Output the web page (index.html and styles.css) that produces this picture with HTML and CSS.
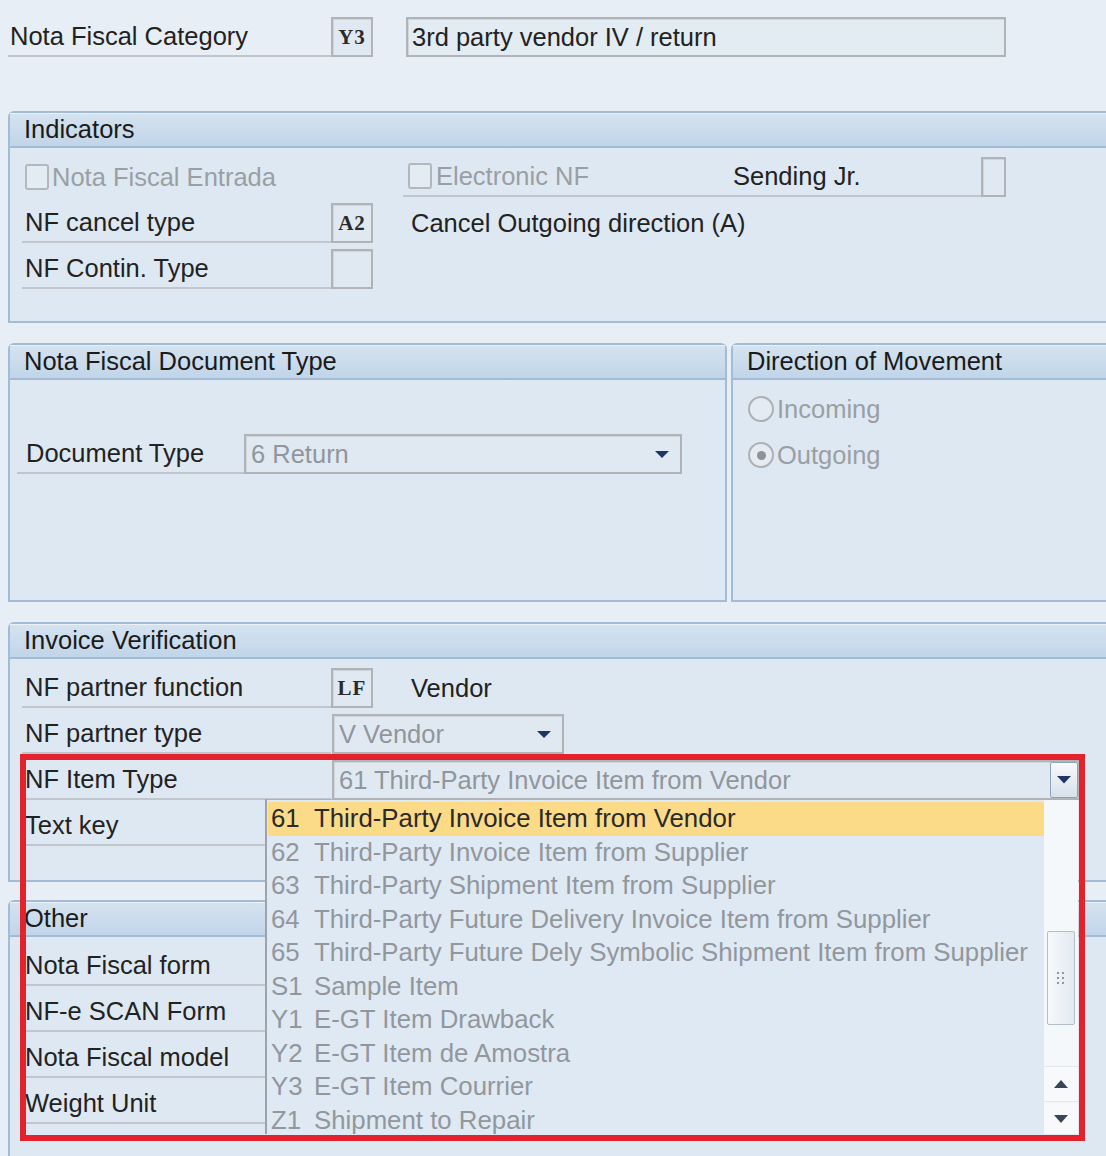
FILE: index.html
```html
<!DOCTYPE html>
<html>
<head>
<meta charset="utf-8">
<title>Nota Fiscal Category</title>
<link rel="stylesheet" href="styles.css">
</head>
<body>
<div class="page">
  <div class="toprow">
    <div class="lbl lbl-top">Nota Fiscal Category</div>
    <div class="box code">Y3</div>
    <div class="box desc">3rd party vendor IV / return</div>
  </div>

  <section class="panel ind">
    <div class="phead">Indicators</div>
    <div class="pbody ind-body">
      <div class="row">
        <div class="chk-cell"><span class="cb"></span><span class="dis">Nota Fiscal Entrada</span></div>
        <div class="chk-line">
          <div class="chk-left"><span class="cb"></span><span class="dis">Electronic NF</span></div>
          <span class="send">Sending Jr.</span>
        </div>
        <div class="box tiny"></div>
      </div>
      <div class="row">
        <div class="lbl">NF cancel type</div>
        <div class="box code">A2</div>
        <span class="after">Cancel Outgoing direction (A)</span>
      </div>
      <div class="row">
        <div class="lbl">NF Contin. Type</div>
        <div class="box code"></div>
      </div>
    </div>
  </section>

  <div class="split">
    <section class="panel doc">
      <div class="phead">Nota Fiscal Document Type</div>
      <div class="pbody doc-body">
        <div class="row">
          <div class="lbl lbl-doc">Document Type</div>
          <div class="box dd dd-doc"><span class="ddtext">6 Return</span><svg class="tri" width="16" height="9" viewBox="0 0 16 9"><path d="M1 1h14L8 8z" fill="#1f3566"/></svg></div>
        </div>
      </div>
    </section>
    <section class="panel dir">
      <div class="phead">Direction of Movement</div>
      <div class="pbody dir-body">
        <div class="radio-row"><span class="rb"></span><span class="dis">Incoming</span></div>
        <div class="radio-row"><span class="rb on"></span><span class="dis">Outgoing</span></div>
      </div>
    </section>
  </div>

  <section class="panel inv">
    <div class="phead">Invoice Verification</div>
    <div class="pbody inv-body">
      <div class="row">
        <div class="lbl">NF partner function</div>
        <div class="box code">LF</div>
        <span class="after">Vendor</span>
      </div>
      <div class="row">
        <div class="lbl">NF partner type</div>
        <div class="box dd dd-vendor"><span class="ddtext">V Vendor</span><svg class="tri" width="16" height="9" viewBox="0 0 16 9"><path d="M1 1h14L8 8z" fill="#1f3566"/></svg></div>
      </div>
      <div class="row">
        <div class="lbl">NF Item Type</div>
        <div class="box dd dd-item"><span class="ddtext">61 Third-Party Invoice Item from Vendor</span><span class="ddbtn"><svg width="14" height="8" viewBox="0 0 14 8"><path d="M0 0h14L7 7.5z" fill="#1f3566"/></svg></span></div>
      </div>
      <div class="row">
        <div class="lbl">Text key</div>
      </div>
    </div>
  </section>

  <section class="panel oth">
    <div class="phead">Other</div>
    <div class="pbody oth-body">
      <div class="row"><div class="lbl lbl-wide">Nota Fiscal form</div></div>
      <div class="row"><div class="lbl lbl-wide">NF-e SCAN Form</div></div>
      <div class="row"><div class="lbl lbl-wide">Nota Fiscal model</div></div>
      <div class="row"><div class="lbl lbl-wide">Weight Unit</div></div>
    </div>
  </section>
</div>

<div class="popup">
  <ul class="list">
    <li class="sel"><span class="c">61</span>Third-Party Invoice Item from Vendor</li>
    <li><span class="c">62</span>Third-Party Invoice Item from Supplier</li>
    <li><span class="c">63</span>Third-Party Shipment Item from Supplier</li>
    <li><span class="c">64</span>Third-Party Future Delivery Invoice Item from Supplier</li>
    <li><span class="c">65</span>Third-Party Future Dely Symbolic Shipment Item from Supplier</li>
    <li><span class="c">S1</span>Sample Item</li>
    <li><span class="c">Y1</span>E-GT Item Drawback</li>
    <li><span class="c">Y2</span>E-GT Item de Amostra</li>
    <li><span class="c">Y3</span>E-GT Item Courrier</li>
    <li><span class="c">Z1</span>Shipment to Repair</li>
  </ul>
  <div class="sbar">
    <div class="thumb"><svg width="10" height="14" viewBox="0 0 10 14"><g fill="#8f979f"><rect x="1" y="1" width="2" height="2"/><rect x="6" y="1" width="2" height="2"/><rect x="1" y="6" width="2" height="2"/><rect x="6" y="6" width="2" height="2"/><rect x="1" y="11" width="2" height="2"/><rect x="6" y="11" width="2" height="2"/></g></svg></div>
    <div class="sbtn up"><svg width="14" height="8" viewBox="0 0 14 8"><path d="M0 8h14L7 0z" fill="#3a4656"/></svg></div>
    <div class="sbtn down"><svg width="14" height="8" viewBox="0 0 14 8"><path d="M0 0h14L7 8z" fill="#3a4656"/></svg></div>
  </div>
</div>

<div class="redbox"></div>
</body>
</html>
```

FILE: styles.css
```css
html, body {
  margin: 0;
  padding: 0;
}
body {
  width: 1106px;
  height: 1156px;
  overflow: hidden;
  position: relative;
  background: #e8eef5;
  font-family: "Liberation Sans", Arial, sans-serif;
  font-size: 25.5px;
  color: #222;
}
.page {
  padding: 17px 0 0 8px;
  width: 1116px;
}

/* generic boxes */
.box {
  box-sizing: border-box;
  height: 40px;
  border: 2px solid #b0b4b8;
  box-shadow: inset 1px 1px 0 #d2d6da;
  background: #e0e9f2;
  display: flex;
  align-items: center;
}
.code {
  width: 42px;
  justify-content: center;
  font-family: "Liberation Serif", "Times New Roman", serif;
  font-weight: bold;
  font-size: 21px;
  letter-spacing: 1px;
  color: #2a2a2a;
}
.tiny {
  width: 25px;
}
.lbl {
  box-sizing: border-box;
  width: 309px;
  height: 40px;
  padding-left: 3px;
  border-bottom: 2px solid #c0c6cc;
  display: flex;
  align-items: center;
  white-space: nowrap;
}
.dis {
  color: #9a9fa4;
}

/* top row */
.toprow {
  display: flex;
  height: 40px;
}
.lbl-top {
  width: 323px;
  padding-left: 2px;
}
.desc {
  width: 600px;
  margin-left: 33px;
  padding-left: 4px;
  background: #e3ebf3;
}

/* panels */
.panel {
  box-sizing: border-box;
  border: 2px solid #a3bcd5;
  border-radius: 6px 6px 0 0;
  background: #dee8f2;
}
.phead {
  height: 33px;
  border-bottom: 2px solid #a3bcd5;
  background: linear-gradient(#d5e3f0, #c1d5e9);
  padding-left: 14px;
  display: flex;
  align-items: center;
  color: #1a1a1a;
  box-shadow: inset 0 1px 0 #eaf1f8;
}
.pbody {
  box-sizing: border-box;
}
.row {
  display: flex;
  align-items: center;
  height: 40px;
  margin-bottom: 6px;
}
.row:last-child {
  margin-bottom: 0;
}
.after {
  margin-left: 38px;
}

/* indicators */
.ind {
  margin-top: 54px;
}
.ind-body {
  padding: 9px 0 32px 12px;
}
.chk-cell {
  width: 381px;
  display: flex;
  align-items: center;
  height: 40px;
}
.cb {
  box-sizing: border-box;
  width: 24px;
  height: 26px;
  border: 2px solid #b3b8bd;
  border-radius: 3px;
  background: #e3ebf3;
  margin: 0 3px 0 3px;
  flex: none;
}
.chk-line {
  box-sizing: border-box;
  width: 578px;
  height: 40px;
  border-bottom: 2px solid #c0c6cc;
  display: flex;
  align-items: center;
}
.chk-line .cb {
  margin-left: 5px;
  margin-right: 4px;
}
.chk-left {
  width: 330px;
  display: flex;
  align-items: center;
}

/* split */
.split {
  display: flex;
  gap: 4px;
  margin-top: 20px;
}
.doc {
  width: 719px;
  flex: none;
}
.dir {
  flex: 1;
}
.doc-body, .dir-body {
  height: 220px;
}
.doc-body {
  padding: 54px 0 0 7px;
}
.lbl-doc {
  width: 227px;
  padding-left: 9px;
}
.dd {
  justify-content: space-between;
  padding: 0 10px 0 5px;
}
.ddtext {
  color: #90969c;
  white-space: nowrap;
}
.dd-doc {
  width: 438px;
}
.dd-vendor {
  width: 232px;
  margin-left: 1px;
}
.dd-item {
  width: 748px;
  margin-left: 1px;
  padding-right: 0;
}
.ddbtn {
  box-sizing: border-box;
  width: 28px;
  height: 36px;
  border: 1px solid #8ea2ba;
  border-radius: 2px;
  background: linear-gradient(#f7f9fb, #d7e1eb);
  display: flex;
  align-items: center;
  justify-content: center;
}
.dir-body {
  padding: 6px 0 0 15px;
}
.radio-row {
  height: 46px;
  display: flex;
  align-items: center;
}
.rb {
  box-sizing: border-box;
  width: 26px;
  height: 26px;
  border: 2px solid #adb1b5;
  border-radius: 50%;
  background: #e4ebf2;
  margin-right: 3px;
  display: flex;
  align-items: center;
  justify-content: center;
}
.rb.on::after {
  content: "";
  width: 9px;
  height: 9px;
  border-radius: 50%;
  background: #8e9398;
}

/* invoice verification */
.inv {
  margin-top: 20px;
}
.inv-body {
  padding: 9px 0 34px 12px;
}

/* other */
.oth {
  margin-top: 18px;
}
.oth-body {
  padding: 9px 0 40px 12px;
}

/* dropdown popup */
.popup {
  position: absolute;
  left: 265px;
  top: 799px;
  width: 813px;
  height: 335px;
  box-sizing: border-box;
  border-left: 2px solid #9ca3aa;
  border-top: 1px solid #aab2ba;
  background: #dfe9f3;
  display: flex;
  font-size: 25.8px;
}
.list {
  list-style: none;
  margin: 0;
  padding: 2px 0 0 1px;
  flex: 1;
}
.list li {
  height: 33.5px;
  display: flex;
  align-items: center;
  padding-left: 3px;
  color: #92979d;
  white-space: nowrap;
}
.list li.sel {
  background: #fcdb88;
  color: #2a2a2a;
}
.list .c {
  width: 43px;
  flex: none;
}
.sbar {
  width: 34px;
  background: #f5f8fb;
  display: flex;
  flex-direction: column;
  align-items: center;
}
.thumb {
  box-sizing: border-box;
  width: 28px;
  height: 94px;
  margin-top: 131px;
  border: 1px solid #b5bec7;
  border-radius: 2px;
  background: linear-gradient(90deg, #f6f9fb, #e2e9f0);
  display: flex;
  align-items: center;
  justify-content: center;
}
.sbtn {
  width: 34px;
  display: flex;
  align-items: center;
  justify-content: center;
  background: #f7f9fb;
}
.sbtn.up {
  margin-top: auto;
  height: 34px;
  border-top: 1px solid #e3e8ed;
  border-bottom: 1px solid #e3e8ed;
}
.sbtn.down {
  height: 30px;
  margin-top: 2px;
}

/* highlight box */
.redbox {
  position: absolute;
  left: 20px;
  top: 754px;
  width: 1065px;
  height: 387px;
  box-sizing: border-box;
  border: 6px solid #e3222d;
}
```
